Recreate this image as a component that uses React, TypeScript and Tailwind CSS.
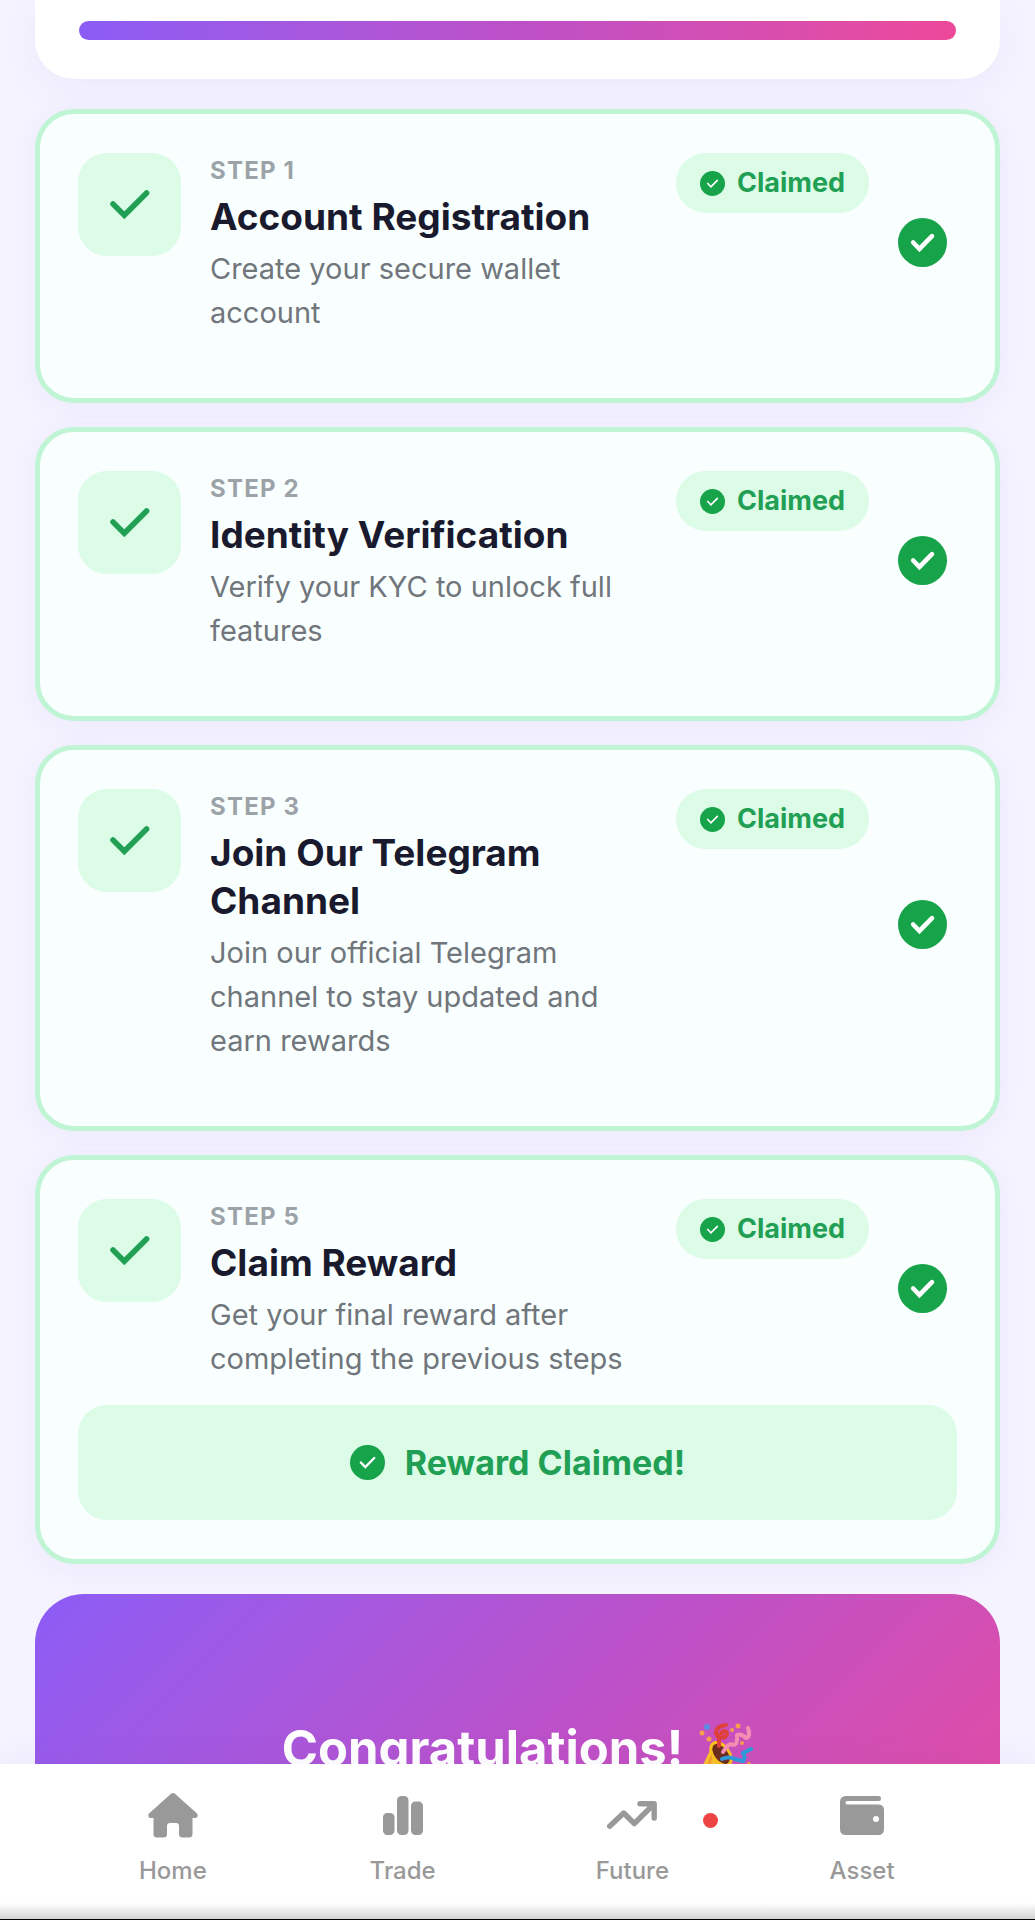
import React from "react";

const steps = [
  {
    id: "STEP 1",
    title: "Account Registration",
    text: "Create your secure wallet account",
  },
  {
    id: "STEP 2",
    title: "Identity Verification",
    text: "Verify your KYC to unlock full features",
  },
  {
    id: "STEP 3",
    title: "Join Our Telegram Channel",
    text: "Join our official Telegram channel to stay updated and earn rewards",
  },
  {
    id: "STEP 5",
    title: "Claim Reward",
    text: "Get your final reward after completing the previous steps",
    reward: "Reward Claimed!",
  },
];

const tabs = [
  { label: "Home", icon: <HomeIcon /> },
  { label: "Trade", icon: <TradeIcon /> },
  { label: "Future", icon: <FutureIcon />, dot: true },
  { label: "Asset", icon: <AssetIcon /> },
];

export default function App() {
  return (
    <div className="flex h-screen flex-col overflow-hidden bg-[#f5f3ff] font-['Inter',sans-serif]">
      <main className="flex min-h-0 flex-1 flex-col overflow-hidden px-[35px]">
        <section className="mb-[30px] shrink-0 rounded-b-[39px] bg-white px-11 pt-[21px] pb-[39px] shadow-[0_10px_40px_rgba(100,80,180,0.06)]">
          <div
            className="h-[19px] rounded-full bg-linear-to-r from-[#8b5cf6] via-[#bd50c8] to-[#ec4899]"
            role="progressbar"
            aria-label="Progress"
            aria-valuenow={100}
          />
        </section>

        <div className="flex shrink-0 flex-col gap-6">
          {steps.map((step) => (
            <StepCard key={step.id} {...step} />
          ))}
        </div>

        <section className="mt-[30px] h-[370px] shrink-0 rounded-[49px] bg-linear-135 from-[#8b5cf6] via-[#bd50c8] to-[#ec4899] pt-[125px] text-white">
          <h2 className="flex items-center justify-center gap-4 text-[49px] leading-[60px] font-bold">
            Congratulations!
            <PartyIcon />
          </h2>
        </section>
      </main>

      <nav className="relative flex h-[156px] shrink-0 border-b border-black bg-white px-[58px] pt-6 shadow-[0_-5px_30px_rgba(100,80,180,0.06)]">
        {tabs.map((tab) => (
          <a key={tab.label} href="#" className="relative flex flex-1 flex-col items-center text-[24px] leading-9 font-medium text-[#999]">
            <span className="flex h-[54px] items-center">{tab.icon}</span>
            <span className="mt-[11px]">{tab.label}</span>
            {tab.dot && <span className="absolute top-[25px] right-[29px] size-[15px] rounded-full bg-[#ef4444]" />}
          </a>
        ))}
        <div className="absolute inset-x-0 bottom-0 h-4 bg-linear-to-b from-white to-[#d4d4d4]" />
      </nav>
    </div>
  );
}

function StepCard({ id, title, text, reward }: { id: string; title: string; text: string; reward?: string }) {
  return (
    <article className="rounded-[39px] border-[5px] border-[#bff5d5] bg-[#f9fffe] px-[38px] py-[39px] shadow-[0_5px_30px_rgba(100,80,180,0.06)]">
      <div className="mb-6 flex">
        <div className="mr-[29px] flex size-[103px] shrink-0 items-center justify-center rounded-[29px] bg-[#dcfce7]">
          <svg width="40" height="30" viewBox="0 0 40 30" fill="none" stroke="#21a055" strokeWidth="5.5" strokeLinecap="round">
            <path d="M3 14 14.3 25.3 36.6 3" />
          </svg>
        </div>
        <div className="min-w-0 flex-1 pr-8">
          <p className="text-[24px] leading-9 font-bold tracking-wider text-[#9ca3a8]">{id}</p>
          <h2 className="mt-1 text-[37px] leading-12 font-bold text-[#1a1a2e]">{title}</h2>
          <p className="mt-1.5 text-[29px] leading-11 text-[#70767c]">{text}</p>
        </div>
        <div className="flex shrink-0">
          <span className="flex h-[60px] items-center gap-3 rounded-full bg-[#dcfce7] px-6 text-[27px] font-bold text-[#21a055]">
            <CheckCircle className="size-[25px]" />
            Claimed
          </span>
          <div className="flex items-center pr-[10px] pb-1 pl-[29px]">
            <CheckCircle className="size-[49px]" bold />
          </div>
        </div>
      </div>
      {reward && (
        <button
          type="button"
          className="flex h-[115px] w-full items-center justify-center gap-5 rounded-[29px] bg-[#dcfce7] text-[34px] font-bold text-[#21a055]"
        >
          <CheckCircle className="size-[35px]" />
          {reward}
        </button>
      )}
    </article>
  );
}

function CheckCircle({ className, bold }: { className: string; bold?: boolean }) {
  return (
    <svg className={className} viewBox="-16 -16 32 32" fill="none" aria-hidden="true">
      <circle r="16" fill="#16a34a" />
      <path d="M-6.1 0 -2 4.2 6.2 -4.1" stroke="white" strokeWidth={bold ? 3 : 2.2} strokeLinecap="round" />
    </svg>
  );
}

function HomeIcon() {
  return (
    <svg width="50" height="45" viewBox="0 0 50 45" fill="#999">
      <path d="M23 .8Q25-.8 27 .8L49 20.5Q51 24 47.5 25H44.5V41Q44.5 44.5 41 44.5H34.5Q31 44.5 31 41V33Q31 30 28 30H22Q19 30 19 33V41Q19 44.5 15.5 44.5H9Q5.5 44.5 5.5 41V25H2.5Q-1 24 1 20.5Z" />
    </svg>
  );
}

function TradeIcon() {
  return (
    <svg width="40" height="39" viewBox="0 0 40 39" fill="#999">
      <rect y="17" width="11.5" height="22" rx="4.5" />
      <rect x="14" width="11.5" height="39" rx="4.5" />
      <rect x="28" y="5.5" width="12" height="33.5" rx="4.5" />
    </svg>
  );
}

function FutureIcon() {
  return (
    <svg width="50" height="28" viewBox="0 0 50 28" fill="none" stroke="#999" strokeWidth="5.4" strokeLinecap="round" strokeLinejoin="round">
      <path d="M2.7 25.2 16.7 12 27.3 22.5 46 4M33 2.8H47.2V17" />
    </svg>
  );
}

function AssetIcon() {
  return (
    <svg width="44" height="39" viewBox="0 0 44 39" fill="#999">
      <path
        fillRule="evenodd"
        d="M6 0H38.5Q41 0 41 2.5T38.5 5H7Q5.5 5 5.5 6.5T7 8.5H38Q44 8.5 44 14V33Q44 39 38 39H6Q0 39 0 33V6Q0 0 6 0ZM36 20A3 3 0 1 0 36 26A3 3 0 1 0 36 20Z"
      />
    </svg>
  );
}

function PartyIcon() {
  return (
    <svg width="54" height="56" viewBox="1 0 54 56" fill="none" strokeLinecap="round" strokeLinejoin="round" aria-hidden="true">
      <path d="M15 23 2 50Q0 56 6 54L33 44Z" fill="#fbc02d" />
      <path d="M14 34 9 50" stroke="#f79329" strokeWidth="2" />
      <ellipse cx="23" cy="33" rx="8" ry="13" transform="rotate(-38 23 33)" fill="#6d2c1b" stroke="#fcc21b" strokeWidth="3" />
      <path d="M28 4Q18 5 18 12Q20 18 27 16Q31 12 27 10Q20 11 21 25" stroke="#e0403c" strokeWidth="4" />
      <path d="M50 7Q53 16 48 17Q43 12 39 14Q40 24 35 24Q31 21 25 31" stroke="#f48fb1" strokeWidth="4" />
      <path d="M24 38Q31 35 37 38L45 40Q48 37 45 32L53 28" stroke="#2d9cdb" strokeWidth="4" />
      <circle cx="9" cy="6" r="3" fill="#5c8de0" />
      <g fill="#f6a04d">
        <circle cx="4" cy="12" r="2.5" />
        <circle cx="11" cy="18" r="2.5" />
        <circle cx="34" cy="9" r="2" />
        <circle cx="40" cy="5" r="2.5" />
        <circle cx="44" cy="22" r="2" />
        <circle cx="51" cy="43" r="2" />
      </g>
    </svg>
  );
}
